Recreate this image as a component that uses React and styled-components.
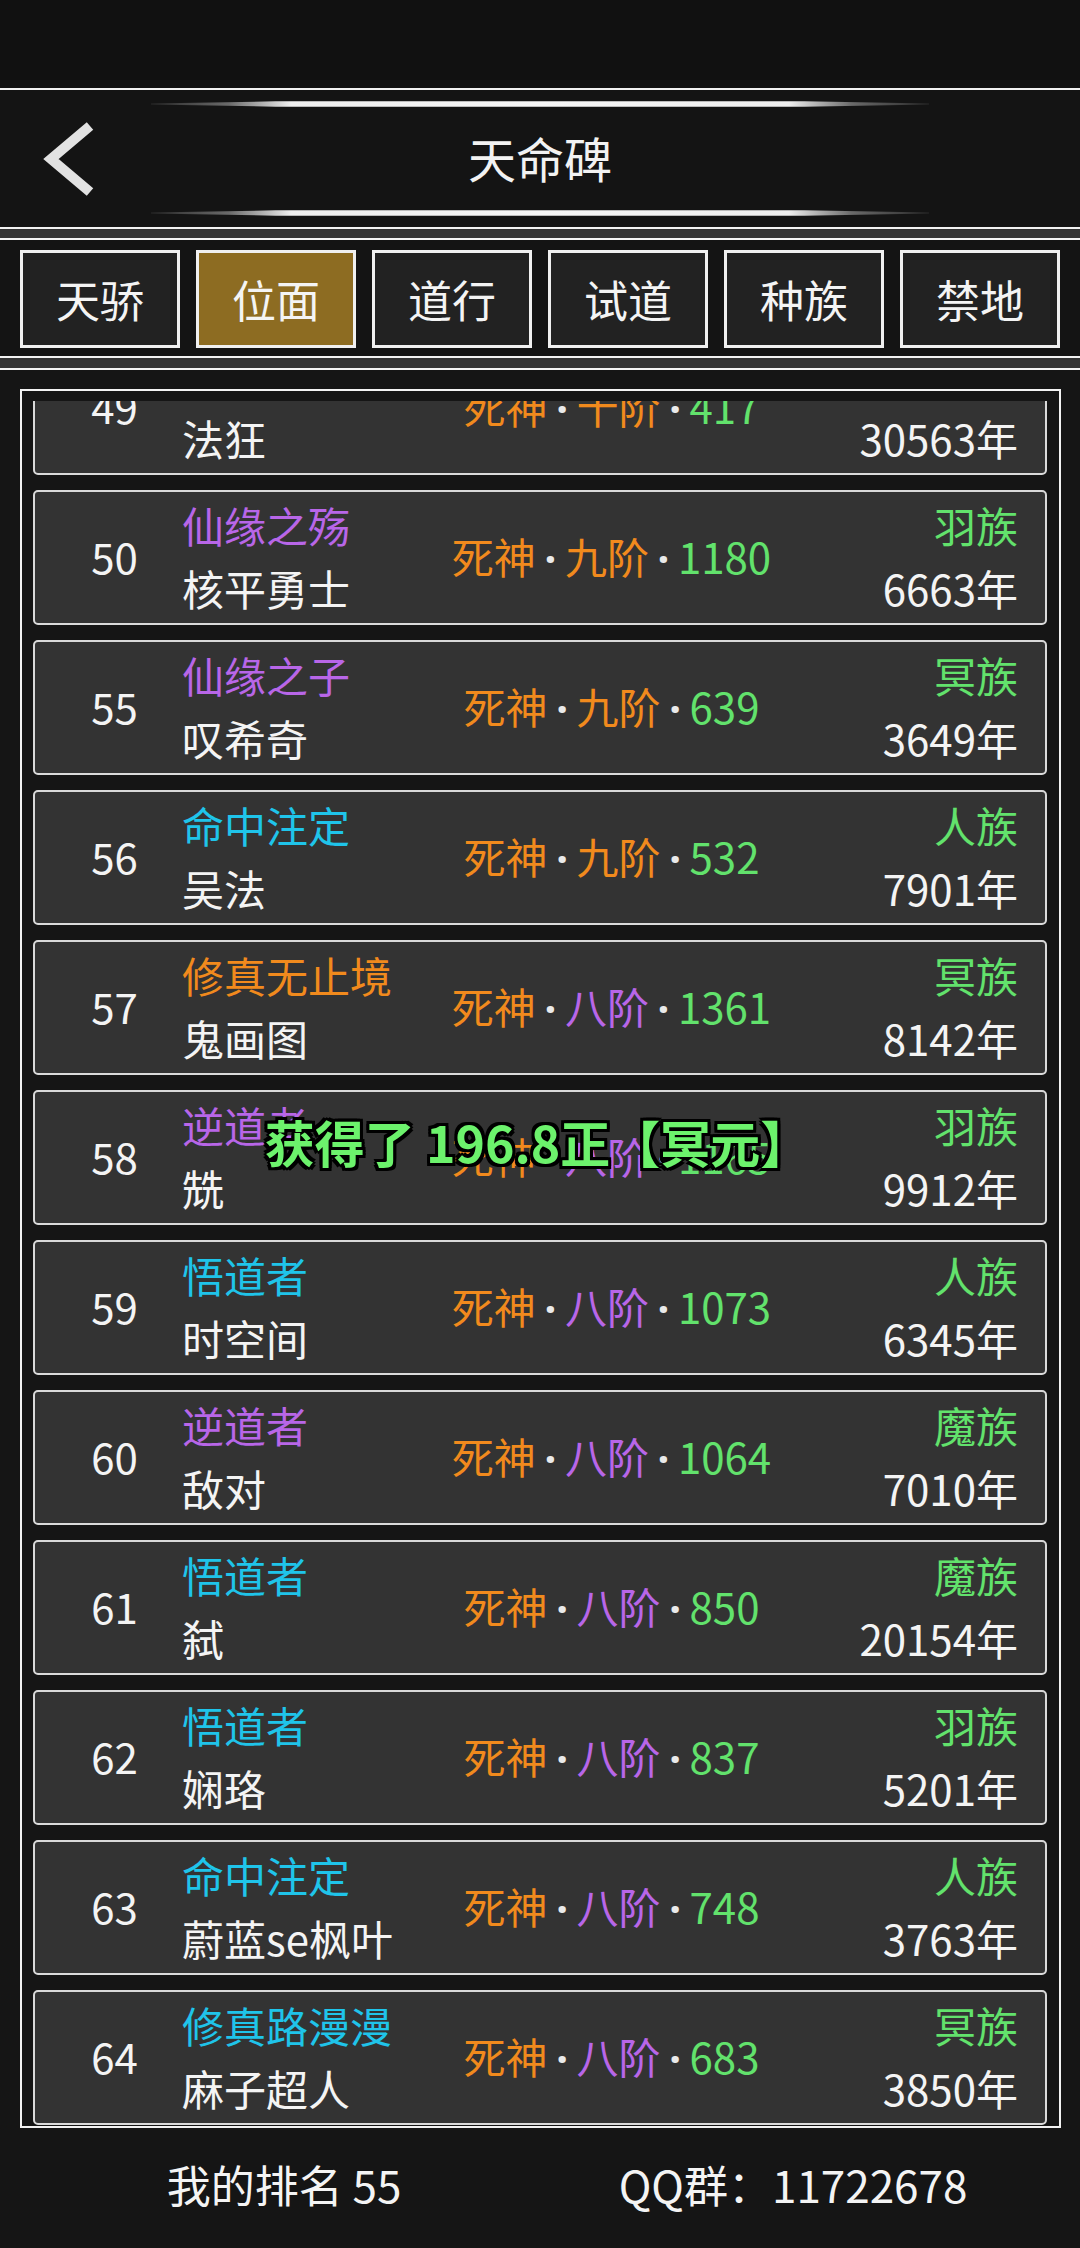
import React from "react";
import styled, { createGlobalStyle } from "styled-components";

const GlobalStyle = createGlobalStyle`
  html, body { margin: 0; padding: 0; background: #111; }
  body { font-family: "Noto Sans CJK SC", "Noto Sans", sans-serif; }
  * { box-sizing: border-box; }
`;

const C = {
  white: "#f4f4f4",
  purple: "#b866e8",
  cyan: "#1fc4ea",
  orange: "#f18a1d",
  green: "#62e26c",
};

const Page = styled.div`
  width: 1080px;
  height: 2248px;
  display: flex;
  flex-direction: column;
  background: #111;
  overflow: hidden;
  color: ${C.white};
`;

const StatusArea = styled.div`
  height: 88px;
  flex: none;
  background: #111;
`;

const Header = styled.header`
  flex: none;
  height: 141px;
  border-top: 2px solid #f2f2f2;
  border-bottom: 2px solid #f2f2f2;
  background: #141414;
  display: grid;
  grid-template-columns: 151px 1fr 151px;
  grid-template-rows: 28px 1fr 28px;
  align-items: center;
`;

const GlowLine = styled.div`
  grid-column: 2;
  grid-row: ${(p) => p.$row};
  height: 6px;
  background: linear-gradient(
    90deg,
    #2a2a2a 0%,
    #6a6a6a 10%,
    #eeeeee 18%,
    #f6f6f6 50%,
    #eeeeee 82%,
    #6a6a6a 90%,
    #2a2a2a 100%
  );
  clip-path: polygon(0 40%, 16% 5%, 84% 5%, 100% 40%, 100% 60%, 84% 95%, 16% 95%, 0 60%);
`;

const Title = styled.h1`
  grid-column: 2;
  grid-row: 2;
  margin: -4px 0 0;
  text-align: center;
  font-size: 48px;
  font-weight: 400;
  color: #f2f2f2;
  line-height: 1;
`;

const BackButton = styled.button`
  grid-column: 1;
  grid-row: 1 / span 3;
  justify-self: start;
  align-self: center;
  margin-left: 38px;
  margin-top: 2px;
  padding: 0;
  border: none;
  background: none;
  width: 64px;
  height: 80px;
  display: flex;
`;

const Strip = styled.div`
  flex: none;
  height: ${(p) => p.$h}px;
  background: #333;
`;

const TabBar = styled.nav`
  flex: none;
  border-top: 2px solid #f2f2f2;
  border-bottom: 2px solid #f2f2f2;
  background: #141414;
  padding: 10px 20px 8px;
  display: grid;
  grid-template-columns: repeat(6, 1fr);
  gap: 16px;
`;

const Tab = styled.div`
  height: 98px;
  border: 3px solid #f0f0f0;
  background: ${(p) => (p.$active ? "#8d6c22" : "#222")};
  display: flex;
  align-items: center;
  justify-content: center;
  font-size: 44px;
  color: #f4f4f4;
  line-height: 1;
`;

const ListSection = styled.section`
  flex: none;
  border-top: 2px solid #f2f2f2;
  background: #151515;
  padding: 19px 19px 0 20px;
`;

const ListBox = styled.div`
  position: relative;
  height: 1739px;
  border: 2px solid #f2f2f2;
  padding: 10px 12px 0 11px;
`;

const Viewport = styled.div`
  height: 100%;
  overflow: hidden;
`;

const Rows = styled.div`
  display: flex;
  flex-direction: column;
  gap: 15px;
  margin-top: -61px;
`;

const Row = styled.div`
  flex: none;
  height: 135px;
  border: 2px solid #dadada;
  border-radius: 5px;
  background: #333;
  display: grid;
  grid-template-columns: 147px 223px 1fr 200px;
  padding-right: 27px;
  align-items: center;
  font-size: 42px;
`;

const Rank = styled.div`
  padding-left: 12px;
  margin-top: -3px;
  text-align: center;
  line-height: 1;
  color: #f4f4f4;
`;

const Stack = styled.div`
  display: flex;
  flex-direction: column;
  margin-top: -3px;
  align-items: ${(p) => (p.$right ? "flex-end" : "flex-start")};
`;

const Line = styled.span`
  line-height: 63px;
  white-space: nowrap;
  color: ${(p) => p.$color || C.white};
`;

const Stage = styled.div`
  text-align: center;
  white-space: nowrap;
  line-height: 1;
  margin-top: -2px;
`;

const Seg = styled.span`
  color: ${(p) => p.$color};
`;

const Dot = styled.span`
  display: inline-block;
  width: 29px;
  text-align: center;
  font-family: "Noto Sans", "DejaVu Sans", sans-serif;
  font-weight: 700;
  color: #eaeaea;
`;

const Toast = styled.div`
  position: absolute;
  top: 750px;
  left: 50%;
  transform: translate(calc(-50% - 3px), -50%);
  white-space: nowrap;
  font-size: 50px;
  font-weight: 700;
  color: #6cf26c;
  line-height: 1;
  text-shadow: -3px -3px 0 #000, 3px -3px 0 #000, -3px 3px 0 #000, 3px 3px 0 #000,
    0 -3px 0 #000, 0 3px 0 #000, -3px 0 0 #000, 3px 0 0 #000;
`;

const Footer = styled.footer`
  flex: none;
  height: 120px;
  display: grid;
  grid-template-columns: 568px 1fr;
  padding: 0 62px 8px 0;
  align-items: center;
  justify-items: center;
  background: #151515;
  font-size: 44px;
  color: #f4f4f4;
`;

const tabs = ["天骄", "位面", "道行", "试道", "种族", "禁地"];

const rows = [
  { rank: 49, title: "悟道者", tc: C.cyan, name: "法狂", tier: "十阶", tierc: C.orange, pts: 417, race: "人族", age: "30563年" },
  { rank: 50, title: "仙缘之殇", tc: C.purple, name: "核平勇士", tier: "九阶", tierc: C.orange, pts: 1180, race: "羽族", age: "6663年" },
  { rank: 55, title: "仙缘之子", tc: C.purple, name: "叹希奇", tier: "九阶", tierc: C.orange, pts: 639, race: "冥族", age: "3649年" },
  { rank: 56, title: "命中注定", tc: C.cyan, name: "吴法", tier: "九阶", tierc: C.orange, pts: 532, race: "人族", age: "7901年" },
  { rank: 57, title: "修真无止境", tc: C.orange, name: "鬼画图", tier: "八阶", tierc: C.purple, pts: 1361, race: "冥族", age: "8142年" },
  { rank: 58, title: "逆道者", tc: C.purple, name: "兟", tier: "八阶", tierc: C.purple, pts: 1165, race: "羽族", age: "9912年" },
  { rank: 59, title: "悟道者", tc: C.cyan, name: "时空间", tier: "八阶", tierc: C.purple, pts: 1073, race: "人族", age: "6345年" },
  { rank: 60, title: "逆道者", tc: C.purple, name: "敌对", tier: "八阶", tierc: C.purple, pts: 1064, race: "魔族", age: "7010年" },
  { rank: 61, title: "悟道者", tc: C.cyan, name: "弑", tier: "八阶", tierc: C.purple, pts: 850, race: "魔族", age: "20154年" },
  { rank: 62, title: "悟道者", tc: C.cyan, name: "娴珞", tier: "八阶", tierc: C.purple, pts: 837, race: "羽族", age: "5201年" },
  { rank: 63, title: "命中注定", tc: C.cyan, name: "蔚蓝se枫叶", tier: "八阶", tierc: C.purple, pts: 748, race: "人族", age: "3763年" },
  { rank: 64, title: "修真路漫漫", tc: C.cyan, name: "麻子超人", tier: "八阶", tierc: C.purple, pts: 683, race: "冥族", age: "3850年" },
];

function Chevron() {
  return (
    <svg width="64" height="80" viewBox="0 0 64 80">
      <polyline
        points="52,6 13,39 52,72"
        fill="none"
        stroke="#e2e2e2"
        strokeWidth="10"
        strokeLinejoin="miter"
        strokeLinecap="butt"
      />
    </svg>
  );
}

export default function App() {
  return (
    <>
      <GlobalStyle />
      <Page>
        <StatusArea />
        <Header>
          <BackButton aria-label="返回">
            <Chevron />
          </BackButton>
          <GlowLine $row={1} />
          <Title>天命碑</Title>
          <GlowLine $row={3} />
        </Header>
        <Strip $h={9} />
        <TabBar>
          {tabs.map((t) => (
            <Tab key={t} $active={t === "位面"}>
              {t}
            </Tab>
          ))}
        </TabBar>
        <Strip $h={10} />
        <ListSection>
          <ListBox>
            <Viewport>
              <Rows>
                {rows.map((r) => (
                  <Row key={r.rank}>
                    <Rank>{r.rank}</Rank>
                    <Stack>
                      <Line $color={r.tc}>{r.title}</Line>
                      <Line>{r.name}</Line>
                    </Stack>
                    <Stage>
                      <Seg $color={C.orange}>死神</Seg>
                      <Dot>·</Dot>
                      <Seg $color={r.tierc}>{r.tier}</Seg>
                      <Dot>·</Dot>
                      <Seg $color={C.green}>{r.pts}</Seg>
                    </Stage>
                    <Stack $right>
                      <Line $color={C.green}>{r.race}</Line>
                      <Line>{r.age}</Line>
                    </Stack>
                  </Row>
                ))}
              </Rows>
            </Viewport>
            <Toast>获得了 196.8正【冥元】</Toast>
          </ListBox>
        </ListSection>
        <Footer>
          <span>我的排名 55</span>
          <span>QQ群：11722678</span>
        </Footer>
      </Page>
    </>
  );
}
